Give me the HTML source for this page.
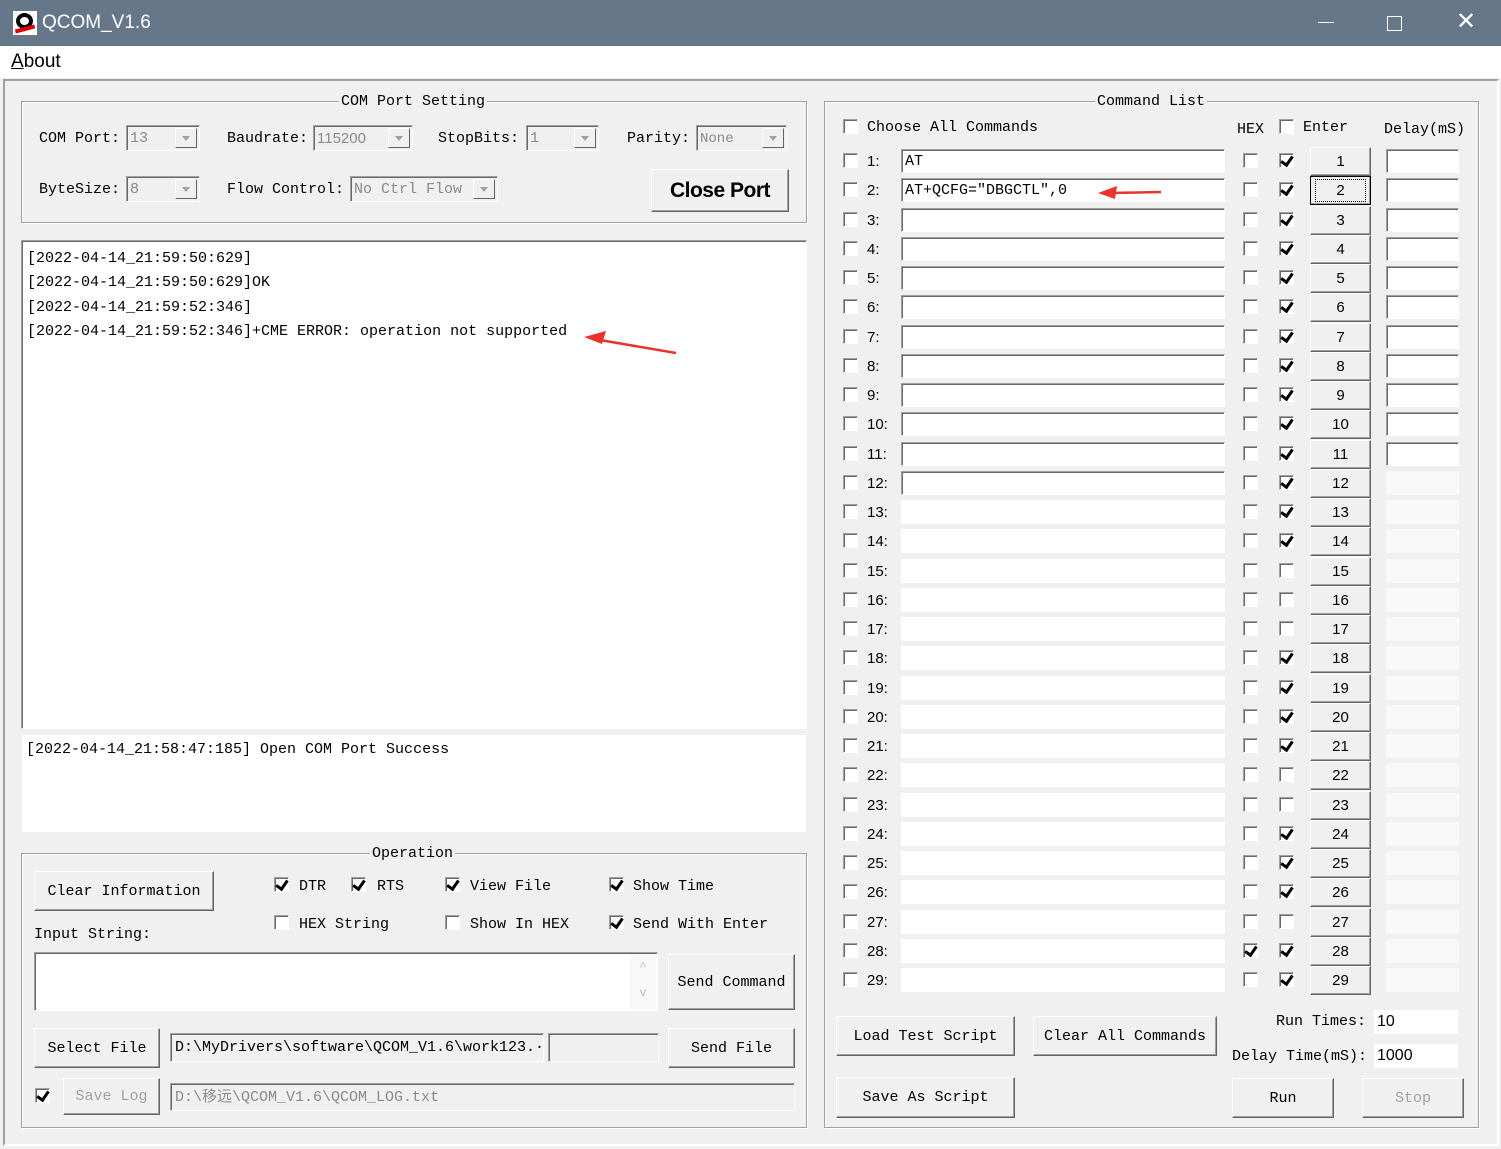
<!DOCTYPE html>
<html><head><meta charset="utf-8"><style>
*{box-sizing:border-box;margin:0;padding:0}
body{width:1501px;height:1149px;background:#f0f0f0;position:relative;overflow:hidden;font-family:"Liberation Mono","Noto Sans CJK SC",monospace;font-size:15px;line-height:21px;color:#000}
.a{position:absolute;white-space:nowrap}
.tb{left:0;top:0;width:1501px;height:46px;background:#66778a}
.grp{position:absolute;border:1px solid #a0a0a0;box-shadow:inset 1px 1px 0 #fff,1px 1px 0 #fff}
.gt{position:absolute;top:-11px;background:#f0f0f0;padding:0 2px;line-height:22px}
.btn{position:absolute;background:#f0f0f0;border:1px solid;border-color:#fff #646464 #646464 #fff;box-shadow:inset -1px -1px 0 #a0a0a0;text-align:center;display:flex;align-items:center;justify-content:center;white-space:nowrap}
.sunk{position:absolute;background:#fff;border:1px solid;border-color:#a0a0a0 #fff #fff #a0a0a0;box-shadow:inset 1px 1px 0 #696969}
.cb{position:absolute;width:15px;height:15px;background:#fff;border:1px solid;border-color:#a0a0a0 #fff #fff #a0a0a0;box-shadow:inset 1px 1px 0 #696969}
.cb.k::after{content:"";position:absolute;left:3px;top:0px;width:5px;height:9px;border:solid #000;border-width:0 3px 3px 0;transform:rotate(35deg)}
.combo{position:absolute;height:26px;background:#f0f0f0;border:1px solid;border-color:#a0a0a0 #fff #fff #a0a0a0;box-shadow:inset 1px 1px 0 #696969;color:#8a8a8a;padding-left:3px;line-height:26px}
.combo i{position:absolute;right:2px;top:2px;width:22px;height:20px;border:1px solid;border-color:#fff #646464 #646464 #fff;background:#f0f0f0}
.combo i::after{content:"";position:absolute;left:6px;top:7px;border:4px solid transparent;border-top:5px solid #a0a0a0}
.inp{position:absolute;left:901px;width:324px;height:24px;background:#fff;line-height:24px;padding-left:3px}
.ib{border:1px solid;border-color:#a0a0a0 #fff #fff #a0a0a0;box-shadow:inset 1px 1px 0 #696969}
.dl{position:absolute;left:1386px;width:73px;height:24px;background:#fff}
.dlf{background:#f8f8f8}
.nb{position:absolute;left:1310px;width:61px;height:29px;font-family:"Liberation Sans",sans-serif;font-size:15px}
.ln{position:absolute;left:867px;font-family:"Liberation Sans",sans-serif}
</style></head><body>
<div class="a tb"></div>
<div class="a" style="left:13px;top:11px;width:24px;height:24px;background:#fff"><div style="position:absolute;left:3px;top:2px;width:17px;height:16px;border:4px solid #000;border-radius:50%"></div><div style="position:absolute;left:2px;top:16px;width:20px;height:4px;background:#d00;transform:rotate(-15deg)"></div></div>
<div class="a" style="left:42px;top:11px;color:#fff;font-family:'Liberation Sans',sans-serif;font-size:19px;line-height:24px">QCOM_V1.6</div>
<div class="a" style="left:1318px;top:22px;width:16px;height:1px;background:#fff"></div>
<div class="a" style="left:1387px;top:16px;width:15px;height:15px;border:1px solid #fff"></div>
<div class="a" style="left:1456px;top:8px;color:#fff;font-family:'Liberation Sans',sans-serif;font-size:24px;line-height:28px">✕</div>
<div class="a" style="left:0;top:46px;width:1501px;height:32px;background:#fff"></div>
<div class="a" style="left:11px;top:50px;font-family:'Liberation Sans',sans-serif;font-size:19px;line-height:24px"><u>A</u>bout</div>
<div class="a" style="left:3px;top:79px;width:1496px;height:1067px;border:2px solid #a0a0a0;border-right-color:#fff;border-bottom-color:#fff"></div>

<!-- COM Port Setting -->
<div class="grp" style="left:21px;top:101px;width:786px;height:122px"><div class="gt" style="left:317px">COM Port Setting</div></div>
<div class="a" style="left:39px;top:128px">COM Port:</div>
<div class="combo" style="left:126px;top:125px;width:74px">13<i></i></div>
<div class="a" style="left:227px;top:128px">Baudrate:</div>
<div class="combo" style="left:313px;top:125px;width:100px;font-family:'Liberation Sans'">115200<i></i></div>
<div class="a" style="left:438px;top:128px">StopBits:</div>
<div class="combo" style="left:526px;top:125px;width:73px">1<i></i></div>
<div class="a" style="left:627px;top:128px">Parity:</div>
<div class="combo" style="left:696px;top:125px;width:91px;font-size:14px">None<i></i></div>
<div class="a" style="left:39px;top:179px">ByteSize:</div>
<div class="combo" style="left:126px;top:176px;width:74px">8<i></i></div>
<div class="a" style="left:227px;top:179px">Flow Control:</div>
<div class="combo" style="left:350px;top:176px;width:148px">No Ctrl Flow<i></i></div>
<div class="btn" style="left:651px;top:169px;width:138px;height:43px;font-family:'Liberation Sans',sans-serif;font-weight:bold;font-size:21px;letter-spacing:-0.5px">Close Port</div>

<!-- log -->
<div class="sunk" style="left:21px;top:240px;width:786px;height:489px;padding:6px 0 0 5px;line-height:24.3px;font-size:15px">[2022-04-14_21:59:50:629]<br>[2022-04-14_21:59:50:629]OK<br>[2022-04-14_21:59:52:346]<br>[2022-04-14_21:59:52:346]+CME ERROR: operation not supported</div>
<svg class="a" style="left:580px;top:326px" width="100" height="32"><line x1="96" y1="27" x2="14" y2="13" stroke="#e8332e" stroke-width="2.5"/><polygon points="4,11 26,5 22,18" fill="#e8332e"/></svg>
<div class="a" style="left:22px;top:735px;width:784px;height:97px;background:#fff;padding:4px 0 0 4px">[2022-04-14_21:58:47:185] Open COM Port Success</div>

<!-- Operation -->
<div class="grp" style="left:21px;top:853px;width:786px;height:275px"><div class="gt" style="left:348px">Operation</div></div>
<div class="btn" style="left:34px;top:871px;width:180px;height:40px">Clear Information</div>
<div class="cb k" style="left:274px;top:877px"></div><div class="a" style="left:299px;top:876px">DTR</div>
<div class="cb k" style="left:351px;top:877px"></div><div class="a" style="left:377px;top:876px">RTS</div>
<div class="cb k" style="left:445px;top:877px"></div><div class="a" style="left:470px;top:876px">View File</div>
<div class="cb k" style="left:609px;top:877px"></div><div class="a" style="left:633px;top:876px">Show Time</div>
<div class="cb" style="left:274px;top:915px"></div><div class="a" style="left:299px;top:914px">HEX String</div>
<div class="cb" style="left:445px;top:915px"></div><div class="a" style="left:470px;top:914px">Show In HEX</div>
<div class="cb k" style="left:609px;top:915px"></div><div class="a" style="left:633px;top:914px">Send With Enter</div>
<div class="a" style="left:34px;top:924px">Input String:</div>
<div class="sunk" style="left:34px;top:952px;width:624px;height:59px"></div>
<div class="a" style="left:630px;top:954px;width:26px;height:55px;background:#f8f8f8;color:#bbb;font-size:12px;text-align:center;line-height:26px">^<br>v</div>
<div class="btn" style="left:668px;top:954px;width:127px;height:56px">Send Command</div>
<div class="btn" style="left:34px;top:1028px;width:126px;height:40px">Select File</div>
<div class="sunk" style="left:170px;top:1033px;width:374px;height:29px;background:#f0f0f0;padding:3px 0 0 4px;overflow:hidden">D:\MyDrivers\software\QCOM_V1.6\work123.·</div>
<div class="sunk" style="left:548px;top:1033px;width:111px;height:29px;background:#f0f0f0"></div>
<div class="btn" style="left:668px;top:1028px;width:127px;height:40px">Send File</div>
<div class="cb k" style="left:35px;top:1088px"></div>
<div class="btn" style="left:63px;top:1078px;width:97px;height:37px;color:#a0a0a0">Save Log</div>
<div class="sunk" style="left:170px;top:1083px;width:625px;height:28px;background:#f0f0f0;color:#8a8a8a;padding:3px 0 0 4px">D:\<span style="font-family:'Noto Sans CJK SC',sans-serif;font-size:15px;line-height:15px">移远</span>\QCOM_V1.6\QCOM_LOG.txt</div>

<!-- Command List -->
<div class="grp" style="left:824px;top:101px;width:655px;height:1027px"><div class="gt" style="left:270px">Command List</div></div>
<div class="cb" style="left:843px;top:119px"></div><div class="a" style="left:867px;top:117px">Choose All Commands</div>
<div class="a" style="left:1237px;top:119px">HEX</div>
<div class="cb" style="left:1279px;top:119px"></div><div class="a" style="left:1303px;top:117px">Enter</div>
<div class="a" style="left:1384px;top:119px">Delay(mS)</div>

<div class="cb" style="left:843px;top:153px"></div><div class="ln" style="top:151px">1:</div><div class="inp ib" style="top:149px">AT</div><div class="cb" style="left:1243px;top:153px"></div><div class="cb k" style="left:1279px;top:153px"></div><div class="btn nb" style="top:147px">1</div><div class="dl ib" style="top:149px"></div>
<div class="cb" style="left:843px;top:182px"></div><div class="ln" style="top:180px">2:</div><div class="inp ib" style="top:178px">AT+QCFG="DBGCTL",0</div><div class="cb" style="left:1243px;top:182px"></div><div class="cb k" style="left:1279px;top:182px"></div><div class="btn nb" style="top:176px;border-color:#000"><span style="border:1px dotted #000;padding:0 20px">2</span></div><div class="dl ib" style="top:178px"></div>
<div class="cb" style="left:843px;top:212px"></div><div class="ln" style="top:210px">3:</div><div class="inp ib" style="top:208px"></div><div class="cb" style="left:1243px;top:212px"></div><div class="cb k" style="left:1279px;top:212px"></div><div class="btn nb" style="top:206px">3</div><div class="dl ib" style="top:208px"></div>
<div class="cb" style="left:843px;top:241px"></div><div class="ln" style="top:239px">4:</div><div class="inp ib" style="top:237px"></div><div class="cb" style="left:1243px;top:241px"></div><div class="cb k" style="left:1279px;top:241px"></div><div class="btn nb" style="top:235px">4</div><div class="dl ib" style="top:237px"></div>
<div class="cb" style="left:843px;top:270px"></div><div class="ln" style="top:268px">5:</div><div class="inp ib" style="top:266px"></div><div class="cb" style="left:1243px;top:270px"></div><div class="cb k" style="left:1279px;top:270px"></div><div class="btn nb" style="top:264px">5</div><div class="dl ib" style="top:266px"></div>
<div class="cb" style="left:843px;top:299px"></div><div class="ln" style="top:297px">6:</div><div class="inp ib" style="top:295px"></div><div class="cb" style="left:1243px;top:299px"></div><div class="cb k" style="left:1279px;top:299px"></div><div class="btn nb" style="top:293px">6</div><div class="dl ib" style="top:295px"></div>
<div class="cb" style="left:843px;top:329px"></div><div class="ln" style="top:327px">7:</div><div class="inp ib" style="top:325px"></div><div class="cb" style="left:1243px;top:329px"></div><div class="cb k" style="left:1279px;top:329px"></div><div class="btn nb" style="top:323px">7</div><div class="dl ib" style="top:325px"></div>
<div class="cb" style="left:843px;top:358px"></div><div class="ln" style="top:356px">8:</div><div class="inp ib" style="top:354px"></div><div class="cb" style="left:1243px;top:358px"></div><div class="cb k" style="left:1279px;top:358px"></div><div class="btn nb" style="top:352px">8</div><div class="dl ib" style="top:354px"></div>
<div class="cb" style="left:843px;top:387px"></div><div class="ln" style="top:385px">9:</div><div class="inp ib" style="top:383px"></div><div class="cb" style="left:1243px;top:387px"></div><div class="cb k" style="left:1279px;top:387px"></div><div class="btn nb" style="top:381px">9</div><div class="dl ib" style="top:383px"></div>
<div class="cb" style="left:843px;top:416px"></div><div class="ln" style="top:414px">10:</div><div class="inp ib" style="top:412px"></div><div class="cb" style="left:1243px;top:416px"></div><div class="cb k" style="left:1279px;top:416px"></div><div class="btn nb" style="top:410px">10</div><div class="dl ib" style="top:412px"></div>
<div class="cb" style="left:843px;top:446px"></div><div class="ln" style="top:444px">11:</div><div class="inp ib" style="top:442px"></div><div class="cb" style="left:1243px;top:446px"></div><div class="cb k" style="left:1279px;top:446px"></div><div class="btn nb" style="top:440px">11</div><div class="dl ib" style="top:442px"></div>
<div class="cb" style="left:843px;top:475px"></div><div class="ln" style="top:473px">12:</div><div class="inp ib" style="top:471px"></div><div class="cb" style="left:1243px;top:475px"></div><div class="cb k" style="left:1279px;top:475px"></div><div class="btn nb" style="top:469px">12</div><div class="dl dlf" style="top:471px"></div>
<div class="cb" style="left:843px;top:504px"></div><div class="ln" style="top:502px">13:</div><div class="inp" style="top:500px"></div><div class="cb" style="left:1243px;top:504px"></div><div class="cb k" style="left:1279px;top:504px"></div><div class="btn nb" style="top:498px">13</div><div class="dl dlf" style="top:500px"></div>
<div class="cb" style="left:843px;top:533px"></div><div class="ln" style="top:531px">14:</div><div class="inp" style="top:529px"></div><div class="cb" style="left:1243px;top:533px"></div><div class="cb k" style="left:1279px;top:533px"></div><div class="btn nb" style="top:527px">14</div><div class="dl dlf" style="top:529px"></div>
<div class="cb" style="left:843px;top:563px"></div><div class="ln" style="top:561px">15:</div><div class="inp" style="top:559px"></div><div class="cb" style="left:1243px;top:563px"></div><div class="cb" style="left:1279px;top:563px"></div><div class="btn nb" style="top:557px">15</div><div class="dl dlf" style="top:559px"></div>
<div class="cb" style="left:843px;top:592px"></div><div class="ln" style="top:590px">16:</div><div class="inp" style="top:588px"></div><div class="cb" style="left:1243px;top:592px"></div><div class="cb" style="left:1279px;top:592px"></div><div class="btn nb" style="top:586px">16</div><div class="dl dlf" style="top:588px"></div>
<div class="cb" style="left:843px;top:621px"></div><div class="ln" style="top:619px">17:</div><div class="inp" style="top:617px"></div><div class="cb" style="left:1243px;top:621px"></div><div class="cb" style="left:1279px;top:621px"></div><div class="btn nb" style="top:615px">17</div><div class="dl dlf" style="top:617px"></div>
<div class="cb" style="left:843px;top:650px"></div><div class="ln" style="top:648px">18:</div><div class="inp" style="top:646px"></div><div class="cb" style="left:1243px;top:650px"></div><div class="cb k" style="left:1279px;top:650px"></div><div class="btn nb" style="top:644px">18</div><div class="dl dlf" style="top:646px"></div>
<div class="cb" style="left:843px;top:680px"></div><div class="ln" style="top:678px">19:</div><div class="inp" style="top:676px"></div><div class="cb" style="left:1243px;top:680px"></div><div class="cb k" style="left:1279px;top:680px"></div><div class="btn nb" style="top:674px">19</div><div class="dl dlf" style="top:676px"></div>
<div class="cb" style="left:843px;top:709px"></div><div class="ln" style="top:707px">20:</div><div class="inp" style="top:705px"></div><div class="cb" style="left:1243px;top:709px"></div><div class="cb k" style="left:1279px;top:709px"></div><div class="btn nb" style="top:703px">20</div><div class="dl dlf" style="top:705px"></div>
<div class="cb" style="left:843px;top:738px"></div><div class="ln" style="top:736px">21:</div><div class="inp" style="top:734px"></div><div class="cb" style="left:1243px;top:738px"></div><div class="cb k" style="left:1279px;top:738px"></div><div class="btn nb" style="top:732px">21</div><div class="dl dlf" style="top:734px"></div>
<div class="cb" style="left:843px;top:767px"></div><div class="ln" style="top:765px">22:</div><div class="inp" style="top:763px"></div><div class="cb" style="left:1243px;top:767px"></div><div class="cb" style="left:1279px;top:767px"></div><div class="btn nb" style="top:761px">22</div><div class="dl dlf" style="top:763px"></div>
<div class="cb" style="left:843px;top:797px"></div><div class="ln" style="top:795px">23:</div><div class="inp" style="top:793px"></div><div class="cb" style="left:1243px;top:797px"></div><div class="cb" style="left:1279px;top:797px"></div><div class="btn nb" style="top:791px">23</div><div class="dl dlf" style="top:793px"></div>
<div class="cb" style="left:843px;top:826px"></div><div class="ln" style="top:824px">24:</div><div class="inp" style="top:822px"></div><div class="cb" style="left:1243px;top:826px"></div><div class="cb k" style="left:1279px;top:826px"></div><div class="btn nb" style="top:820px">24</div><div class="dl dlf" style="top:822px"></div>
<div class="cb" style="left:843px;top:855px"></div><div class="ln" style="top:853px">25:</div><div class="inp" style="top:851px"></div><div class="cb" style="left:1243px;top:855px"></div><div class="cb k" style="left:1279px;top:855px"></div><div class="btn nb" style="top:849px">25</div><div class="dl dlf" style="top:851px"></div>
<div class="cb" style="left:843px;top:884px"></div><div class="ln" style="top:882px">26:</div><div class="inp" style="top:880px"></div><div class="cb" style="left:1243px;top:884px"></div><div class="cb k" style="left:1279px;top:884px"></div><div class="btn nb" style="top:878px">26</div><div class="dl dlf" style="top:880px"></div>
<div class="cb" style="left:843px;top:914px"></div><div class="ln" style="top:912px">27:</div><div class="inp" style="top:910px"></div><div class="cb" style="left:1243px;top:914px"></div><div class="cb" style="left:1279px;top:914px"></div><div class="btn nb" style="top:908px">27</div><div class="dl dlf" style="top:910px"></div>
<div class="cb" style="left:843px;top:943px"></div><div class="ln" style="top:941px">28:</div><div class="inp" style="top:939px"></div><div class="cb k" style="left:1243px;top:943px"></div><div class="cb k" style="left:1279px;top:943px"></div><div class="btn nb" style="top:937px">28</div><div class="dl dlf" style="top:939px"></div>
<div class="cb" style="left:843px;top:972px"></div><div class="ln" style="top:970px">29:</div><div class="inp" style="top:968px"></div><div class="cb" style="left:1243px;top:972px"></div><div class="cb k" style="left:1279px;top:972px"></div><div class="btn nb" style="top:966px">29</div><div class="dl dlf" style="top:968px"></div>
<svg class="a" style="left:1095px;top:183px" width="70" height="18"><line x1="66" y1="9" x2="14" y2="10" stroke="#e8332e" stroke-width="2.5"/><polygon points="3,10 22,3 20,16" fill="#e8332e"/></svg>

<div class="btn" style="left:836px;top:1016px;width:179px;height:40px">Load Test Script</div>
<div class="btn" style="left:1033px;top:1016px;width:184px;height:40px">Clear All Commands</div>
<div class="a" style="left:1276px;top:1011px">Run Times:</div>
<div class="a" style="left:1374px;top:1010px;width:84px;height:24px;background:#fff;padding:1px 0 0 3px;font-family:'Liberation Sans',sans-serif;font-size:16px">10</div>
<div class="a" style="left:1232px;top:1046px">Delay Time(mS):</div>
<div class="a" style="left:1374px;top:1044px;width:84px;height:24px;background:#fff;padding:1px 0 0 3px;font-family:'Liberation Sans',sans-serif;font-size:16px">1000</div>
<div class="btn" style="left:836px;top:1077px;width:179px;height:41px">Save As Script</div>
<div class="btn" style="left:1232px;top:1078px;width:102px;height:40px">Run</div>
<div class="btn" style="left:1362px;top:1078px;width:102px;height:40px;color:#a0a0a0">Stop</div>
</body></html>
